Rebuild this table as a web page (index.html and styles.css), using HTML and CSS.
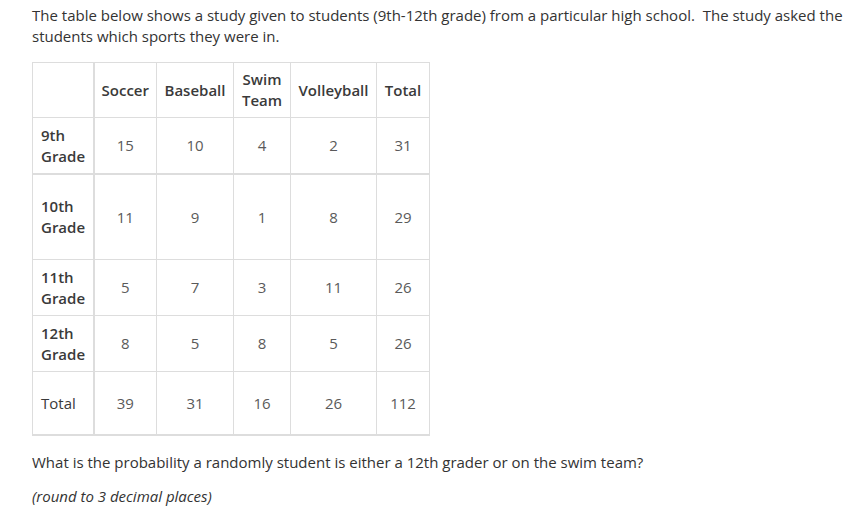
FILE: index.html
```html
<!DOCTYPE html>
<html>
<head>
<meta charset="utf-8">
<link rel="stylesheet" href="styles.css">
</head>
<body>
<div class="content">
<p class="intro">The table below shows a study given to students (9th-12th grade) from a particular high school.&nbsp; The study asked the students which sports they were in.</p>
<table class="study">
<colgroup>
<col class="c0"><col class="c1"><col class="c2"><col class="c3"><col class="c4"><col class="c5">
</colgroup>
<tr class="r-head">
<th class="corner"></th><th>Soccer</th><th>Baseball</th><th>Swim<br>Team</th><th>Volleyball</th><th>Total</th>
</tr>
<tr class="r-a">
<th class="rh">9th<br>Grade</th><td>15</td><td>10</td><td>4</td><td>2</td><td>31</td>
</tr>
<tr class="r-b">
<th class="rh">10th<br>Grade</th><td>11</td><td>9</td><td>1</td><td>8</td><td>29</td>
</tr>
<tr class="r-a">
<th class="rh">11th<br>Grade</th><td>5</td><td>7</td><td>3</td><td>11</td><td>26</td>
</tr>
<tr class="r-a">
<th class="rh">12th<br>Grade</th><td>8</td><td>5</td><td>8</td><td>5</td><td>26</td>
</tr>
<tr class="r-total">
<th class="rh total">Total</th><td>39</td><td>31</td><td>16</td><td>26</td><td>112</td>
</tr>
</table>
<p class="question">What is the probability a randomly student is either a 12th grader or on the swim team?</p>
<p class="note"><em>(round to 3 decimal places)</em></p>
</div>
</body>
</html>
```
FILE: styles.css
```css
html, body {
  margin: 0;
  padding: 0;
  background: #fff;
}
body {
  font-family: "Open Sans", "DejaVu Sans", sans-serif;
  font-size: 15px;
  line-height: 21px;
  color: #333;
}
.content {
  padding: 5px 12px 0 32px;
}
.intro {
  margin: 0 0 15px 0;
}
.study {
  border-collapse: collapse;
  table-layout: fixed;
  width: 397px;
  border-bottom: 2px solid #ddd;
}
.c0 { width: 61px; }
.c1 { width: 63px; }
.c2 { width: 77px; }
.c3 { width: 57px; }
.c4 { width: 86px; }
.c5 { width: 53px; }
.study th, .study td {
  border: 1px solid #ddd;
  padding: 0 8px;
  vertical-align: middle;
  text-align: center;
  line-height: 21px;
}
.study th {
  font-weight: 600;
  color: #3a3a3a;
}
.study td {
  color: #5a5a5a;
}
.study th.rh {
  text-align: left;
  border-right: 2px solid #ddd;
}
.study th.corner {
  border-right: 2px solid #ddd;
}
.study th.total {
  font-weight: 400;
}
.r-head th {
  height: 54px;
  padding: 0 2px;
}
.r-head th.corner { padding: 0; }
.r-a th, .r-a td { height: 55px; }
.r-b th, .r-b td { height: 84px; border-top: 2px solid #ddd; }
.r-total th, .r-total td { height: 62px; }
.question {
  margin: 16px 0 13px 0;
}
.note {
  margin: 0;
}
```
